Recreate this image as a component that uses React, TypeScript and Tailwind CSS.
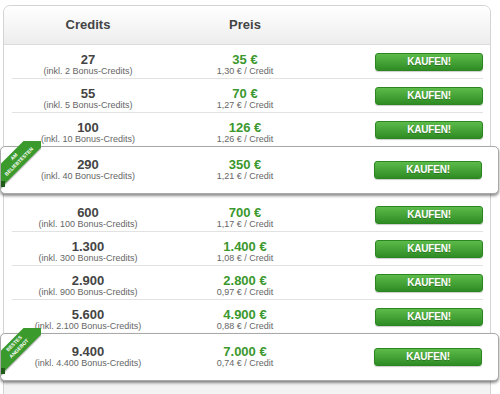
import React from 'react'

type Pack = { credits: string; bonus: string; price: string; per: string }

const topPacks: Pack[] = [
  { credits: '27', bonus: '2', price: '35', per: '1,30' },
  { credits: '55', bonus: '5', price: '70', per: '1,27' },
  { credits: '100', bonus: '10', price: '126', per: '1,26' },
]

const midPacks: Pack[] = [
  { credits: '600', bonus: '100', price: '700', per: '1,17' },
  { credits: '1.300', bonus: '300', price: '1.400', per: '1,08' },
  { credits: '2.900', bonus: '900', price: '2.800', per: '0,97' },
  { credits: '5.600', bonus: '2.100', price: '4.900', per: '0,88' },
]

function BuyButton({ className = '' }: { className?: string }) {
  return (
    <button
      className={`w-[108px] h-[18px] rounded-[3px] border border-[#2b8520] bg-linear-to-b from-[#5cbb4a] to-[#2e8c24] text-white text-[10px] font-bold leading-none tracking-[-0.2px] [text-shadow:0_1px_0_rgba(0,0,0,0.25)] shadow-[0_1px_1px_rgba(0,0,0,0.2)] ${className}`}
    >
      KAUFEN!
    </button>
  )
}

function Cells({ p }: { p: Pack }) {
  return (
    <>
      <div className="w-[168px] text-center">
        <div className="text-[13px] leading-[12px] font-bold text-[#444]">{p.credits}</div>
        <div className="text-[9px] leading-[10px] text-[#666]">(inkl. {p.bonus} Bonus-Credits)</div>
      </div>
      <div className="w-[146px] text-center">
        <div className="text-[13px] leading-[12px] font-bold text-[#3b982d]">{p.price} €</div>
        <div className="text-[9px] leading-[10px] text-[#666]">{p.per} € / Credit</div>
      </div>
    </>
  )
}

function Row({ p, divider }: { p: Pack; divider: boolean }) {
  return (
    <>
      <div className="flex items-start h-[33px]">
        <div className="flex pt-[9px]">
          <Cells p={p} />
        </div>
        <BuyButton className="ml-auto mr-[7px] mt-[8px]" />
      </div>
      {divider && <div className="mx-[8px] mr-[7px] h-px bg-[#e2e2e2]" />}
    </>
  )
}

function Ribbon({ top, bottom }: { top: string; bottom: string }) {
  return (
    <div className="absolute left-0 top-[-6px] w-[40px] h-[48px] overflow-hidden">
      <div className="absolute left-[-20px] top-[10px] w-[72px] h-[17px] -rotate-45 bg-[#3a9a2c] text-white text-center font-bold text-[5px] leading-[7px] pt-[1px] shadow-[0_1px_1px_rgba(0,0,0,0.3)]">
        {top}
        <br />
        {bottom}
      </div>
      <div className="absolute left-0 top-[40px] w-[4px] h-[6px] bg-[#1f5c17]" />
    </div>
  )
}

function Highlight({ p, top, bottom }: { p: Pack; top: string; bottom: string }) {
  return (
    <div className="relative ml-[-4px] mr-[-9px] h-[48px] flex items-center bg-white border border-[#a9a9a9] rounded-[5px] shadow-[0_2px_3px_rgba(0,0,0,0.45)]">
      <div className="flex pl-[3px]">
        <Cells p={p} />
      </div>
      <BuyButton className="ml-auto mr-[16px]" />
      <Ribbon top={top} bottom={bottom} />
    </div>
  )
}

export default function App() {
  return (
    <div className="w-[500px] h-[394px] overflow-hidden bg-white pl-[3px] pt-[5px] font-['Liberation_Sans',Arial,sans-serif]">
      <div className="w-[488px] border border-[#d4d4d4] rounded-t-[7px] bg-white">
        <div className="flex items-center h-[39px] border-b border-[#dcdcdc] rounded-t-[7px] bg-linear-to-b from-[#ffffff] to-[#ededed] text-[13px] font-bold text-[#444]">
          <div className="w-[168px] text-center">Credits</div>
          <div className="w-[146px] text-center">Preis</div>
        </div>
        {topPacks.map((p, i) => (
          <Row key={p.credits} p={p} divider={i < topPacks.length - 1} />
        ))}
        <Highlight p={{ credits: '290', bonus: '40', price: '350', per: '1,21' }} top="AM" bottom="BELIEBTESTEN" />
        <div className="mt-[4px]">
          {midPacks.map((p, i) => (
            <Row key={p.credits} p={p} divider={i < midPacks.length - 1} />
          ))}
        </div>
        <Highlight p={{ credits: '9.400', bonus: '4.400', price: '7.000', per: '0,74' }} top="BESTES" bottom="ANGEBOT" />
        <div className="h-[20px] bg-[#f3f3f3]" />
      </div>
    </div>
  )
}
